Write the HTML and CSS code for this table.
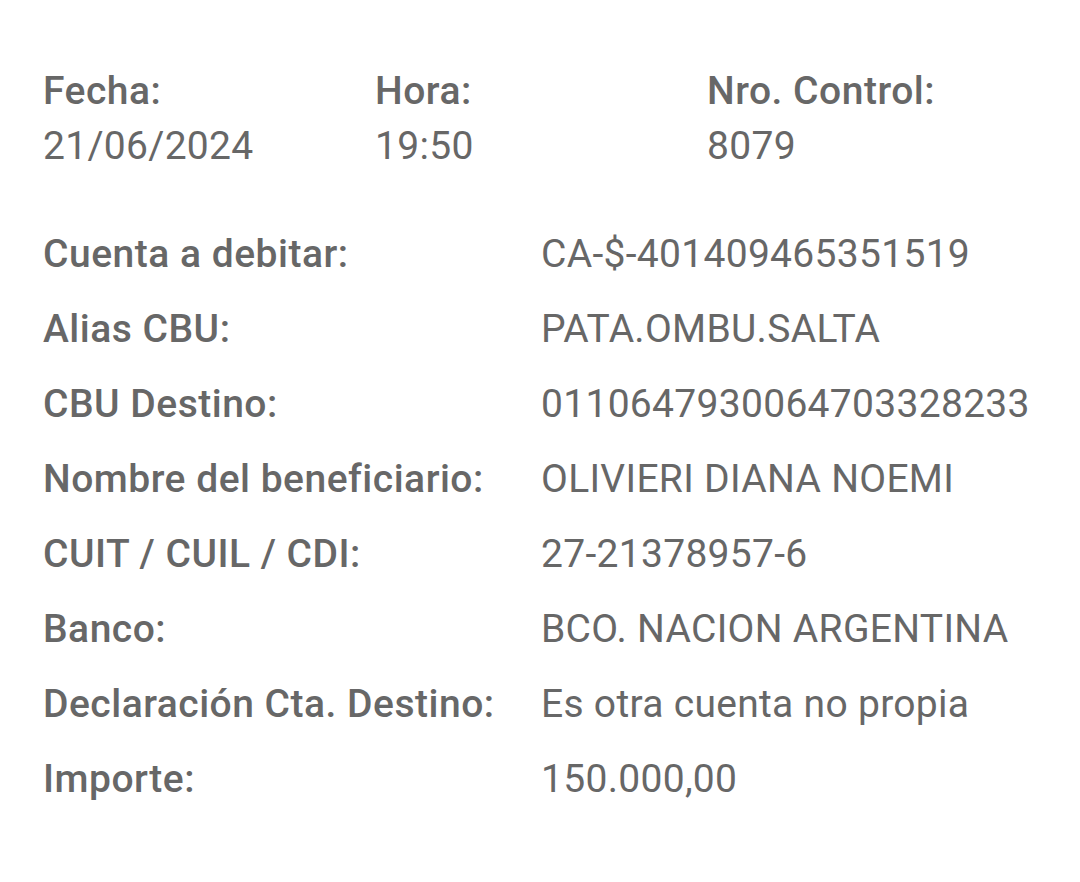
FILE: index.html
```html
<!DOCTYPE html>
<html lang="es">
<head>
<meta charset="utf-8">
<link rel="stylesheet" href="styles.css">
</head>
<body>
<div class="page">
  <div class="top">
    <div class="cell"><div class="lbl">Fecha:</div><div class="val">21/06/2024</div></div>
    <div class="cell"><div class="lbl">Hora:</div><div class="val">19:50</div></div>
    <div class="cell"><div class="lbl">Nro. Control:</div><div class="val">8079</div></div>
  </div>
  <div class="details">
    <div class="lbl">Cuenta a debitar:</div><div class="val">CA-$-401409465351519</div>
    <div class="lbl">Alias CBU:</div><div class="val">PATA.OMBU.SALTA</div>
    <div class="lbl">CBU Destino:</div><div class="val">0110647930064703328233</div>
    <div class="lbl">Nombre del beneficiario:</div><div class="val">OLIVIERI DIANA NOEMI</div>
    <div class="lbl">CUIT / CUIL / CDI:</div><div class="val">27-21378957-6</div>
    <div class="lbl">Banco:</div><div class="val">BCO. NACION ARGENTINA</div>
    <div class="lbl">Declaración Cta. Destino:</div><div class="val">Es otra cuenta no propia</div>
    <div class="lbl">Importe:</div><div class="val">150.000,00</div>
  </div>
</div>
</body>
</html>
```
FILE: styles.css
```css
html, body { margin: 0; padding: 0; background: #ffffff; }
body {
  font-family: Roboto, "Noto Sans", sans-serif;
  color: #676767;
  font-size: 39px;
}
.page { padding: 64px 0 0 43px; }
.top {
  display: grid;
  grid-template-columns: 332px 332px 332px;
  line-height: 55px;
}
.lbl { font-weight: 500; letter-spacing: 0.5px; }
.val { font-weight: 400; letter-spacing: 0.3px; }
.details {
  margin-top: 43px;
  display: grid;
  grid-template-columns: 498px auto;
  grid-auto-rows: 75px;
  line-height: 75px;
}
```
